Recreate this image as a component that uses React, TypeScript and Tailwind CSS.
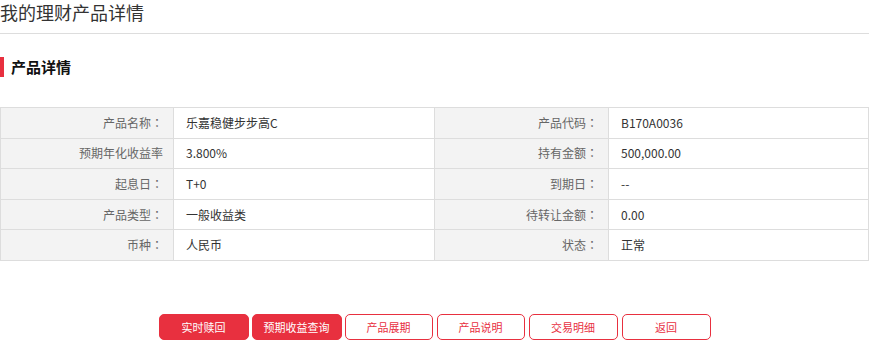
import React from "react";

const rows = [
  ["产品名称", "乐嘉稳健步步高C", "产品代码", "B170A0036"],
  ["预期年化收益率", "3.800%", "持有金额", "500,000.00"],
  ["起息日", "T+0", "到期日", "--"],
  ["产品类型", "一般收益类", "待转让金额", "0.00"],
  ["币种", "人民币", "状态", "正常"],
];

const buttons = [
  { name: "实时赎回", solid: true, cls: "w-[90px]" },
  { name: "预期收益查询", solid: true, cls: "w-[90px] ml-[3px]" },
  { name: "产品展期", solid: false, cls: "w-[88px] ml-[3px]" },
  { name: "产品说明", solid: false, cls: "w-[88px] ml-[4px]" },
  { name: "交易明细", solid: false, cls: "w-[89px] ml-[4px]" },
  { name: "返回", solid: false, cls: "w-[89px] ml-[4px]" },
];

function Label({ text }: { text: string }) {
  // "预期年化收益率" 没有冒号
  if (text === "预期年化收益率") return <>{text}</>;
  return (
    <>
      {text}
      <span style={{ fontFamily: '"Noto Sans CJK JP", sans-serif' }}>：</span>
    </>
  );
}

export default function App() {
  return (
    <div
      className="w-[869px] bg-white text-[#333]"
      style={{ fontFamily: '"Noto Sans CJK SC", "Noto Sans", sans-serif' }}
    >
      {/* 页面标题 */}
      <div className="h-[34px] border-b border-[#ddd] text-[18px] leading-[24px] text-[#333]">
        我的理财产品详情
      </div>

      {/* 区块标题 */}
      <div className="mt-[23px] flex h-[20px] items-center">
        <span className="h-[20px] w-[4px] bg-[#e8303f]" />
        <span className="ml-[7px] text-[15px] font-bold leading-[20px] text-[#111]">
          产品详情
        </span>
      </div>

      {/* 详情表格 */}
      <table className="mt-[30px] w-full table-fixed border-collapse text-[12px]">
        <colgroup>
          <col className="w-[173px]" />
          <col className="w-[261px]" />
          <col className="w-[174px]" />
          <col />
        </colgroup>
        <tbody>
          {rows.map((r) => (
            <tr key={r[0]} className="h-[30.6px]">
              <td className="border border-[#ddd] bg-[#f3f3f3] pr-[10px] text-right text-[#666]">
                <Label text={r[0]} />
              </td>
              <td className="border border-[#ddd] pl-[12px] text-[#333]">{r[1]}</td>
              <td className="border border-[#ddd] bg-[#f3f3f3] pr-[10px] text-right text-[#666]">
                <Label text={r[2]} />
              </td>
              <td className="border border-[#ddd] pl-[12px] text-[#333]">{r[3]}</td>
            </tr>
          ))}
        </tbody>
      </table>

      {/* 操作按钮 */}
      <div className="mt-[53px] flex justify-center">
        {buttons.map((b) => (
          <button
            key={b.name}
            className={`h-[26px] rounded-[5px] border border-[#e8303f] text-[11px] ${b.cls} ${
              b.solid ? "bg-[#e8303f] text-white" : "bg-white text-[#e8303f]"
            }`}
          >
            {b.name}
          </button>
        ))}
      </div>
    </div>
  );
}
